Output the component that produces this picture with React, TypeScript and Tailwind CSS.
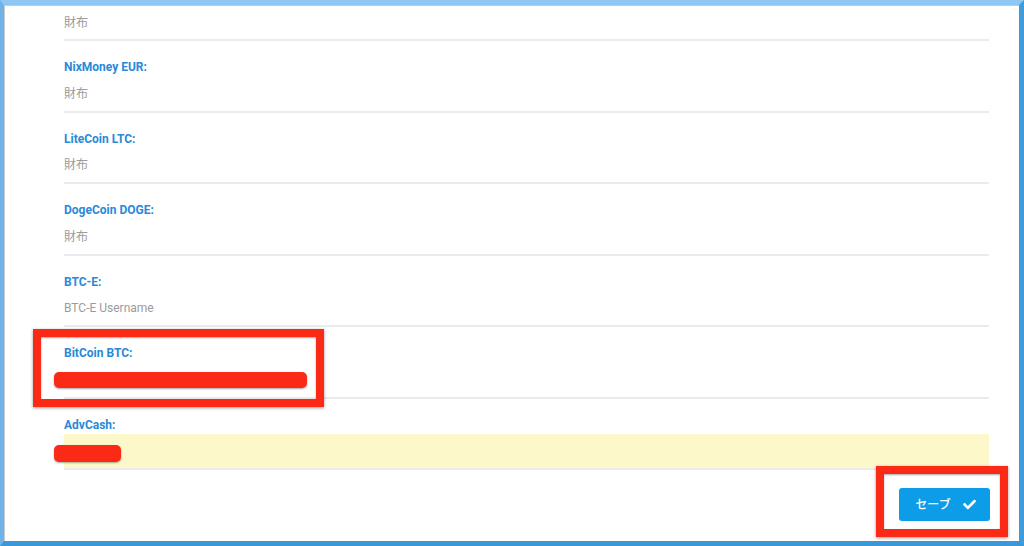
import { FaCheck } from "react-icons/fa";

type Field = {
  label: string;
  placeholder: string;
  redacted?: "long" | "short";
  highlighted?: boolean;
};

const fields: Field[] = [
  { label: "NixMoney EUR:", placeholder: "財布" },
  { label: "LiteCoin LTC:", placeholder: "財布" },
  { label: "DogeCoin DOGE:", placeholder: "財布" },
  { label: "BTC-E:", placeholder: "BTC-E Username" },
  { label: "BitCoin BTC:", placeholder: "", redacted: "long" },
  { label: "AdvCash:", placeholder: "", redacted: "short", highlighted: true },
];

const font = { fontFamily: '"Roboto", "Noto Sans CJK JP", sans-serif' };

const WalletInput = ({ field }: { field: Field }) => {
  return (
    <div
      className={
        "relative h-[36px] border-b-2 border-[#ebebeb] flex items-center text-[12px] text-[#9b9b9b] " +
        (field.highlighted ? "bg-[#fdf8c9]" : "bg-white")
      }
    >
      {field.placeholder}
      {field.redacted === "long" && (
        <span className="absolute left-[-10px] top-[9px] w-[253px] h-[16px] rounded-[5px] bg-[#fb2a17] shadow-[0_1px_2px_rgba(0,0,0,0.35)]" />
      )}
      {field.redacted === "short" && (
        <span className="absolute left-[-10px] top-[11px] w-[67px] h-[17px] rounded-[5px] bg-[#fb2a17] shadow-[0_1px_2px_rgba(0,0,0,0.35)]" />
      )}
    </div>
  );
};

const App = () => {
  return (
    <div
      className="relative w-[1024px] h-[546px] overflow-hidden bg-white border-t-[5px] border-l-[4px] border-r-[5px] border-b-[5px] border-t-[#8fc7f4] border-l-[#6fb3ea] border-r-[#3f9bdb] border-b-[#3a98d9]"
      style={font}
    >
      <div className="h-full border-t border-l border-[#c9c9c9] pl-[59px] pr-[29px]">
        <div className="w-[925px]">
          <div className="h-[35px] border-b-2 border-[#ebebeb] flex items-center text-[12px] text-[#9b9b9b]">財布</div>
          {fields.map((field) => (
            <div key={field.label} className="pt-[18px]">
              <div className="h-[16px] leading-[16px] text-[12px] font-bold text-[#2a89d8]">{field.label}</div>
              <div className="mt-[1.5px]">
                <WalletInput field={field} />
              </div>
            </div>
          ))}
          <div className="flex justify-end mt-[18px] mr-[-1px]">
            <button
              type="button"
              className="h-[33px] w-[91px] pl-[2px] rounded-[3px] bg-[#0c9ce8] text-white text-[12px] font-medium flex items-center justify-center gap-[12px]"
            >
              セーブ
              <FaCheck className="w-[13px] h-[13px]" />
            </button>
          </div>
        </div>
      </div>

      {/* annotation boxes */}
      <div className="absolute left-[29px] top-[324px] w-[291px] h-[78px] border-[8px] border-[#fb2a17] shadow-[0_1px_3px_rgba(0,0,0,0.4),inset_0_1px_2px_rgba(0,0,0,0.35)]" />
      <div className="absolute left-[872px] top-[461px] w-[132px] h-[71px] border-[8px] border-[#fb2a17] shadow-[0_1px_3px_rgba(0,0,0,0.4),inset_0_1px_2px_rgba(0,0,0,0.35)]" />
    </div>
  );
};

export default App;
